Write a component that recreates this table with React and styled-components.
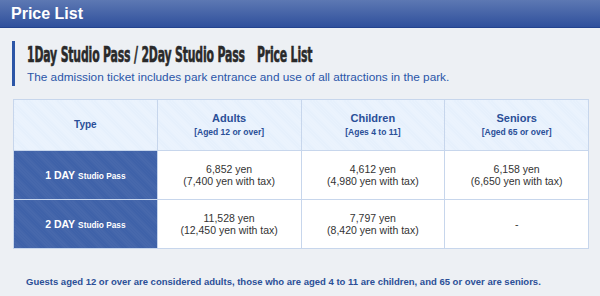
import React from "react";
import styled, { createGlobalStyle } from "styled-components";

const GlobalStyle = createGlobalStyle`
  html, body {
    margin: 0;
    padding: 0;
    background: #edf0f4;
  }
  body {
    font-family: "Liberation Sans", Arial, sans-serif;
  }
`;

const rows = [
  {
    day: "1 DAY",
    prices: [
      ["6,852 yen", "(7,400 yen with tax)"],
      ["4,612 yen", "(4,980 yen with tax)"],
      ["6,158 yen", "(6,650 yen with tax)"],
    ],
  },
  {
    day: "2 DAY",
    prices: [
      ["11,528 yen", "(12,450 yen with tax)"],
      ["7,797 yen", "(8,420 yen with tax)"],
      null,
    ],
  },
];

const groups = [
  { name: "Adults", ages: "[Aged 12 or over]" },
  { name: "Children", ages: "[Ages 4 to 11]" },
  { name: "Seniors", ages: "[Aged 65 or over]" },
];

const Page = styled.div`
  width: 600px;
  height: 296px;
  overflow: hidden;
  background: #edf0f4;
`;

const TopBar = styled.div`
  height: 27px;
  border-bottom: 1px solid #23438e;
  background: linear-gradient(#5d78b3, #2f509c);
  display: flex;
  align-items: center;
  padding-left: 11px;
  h1 {
    margin: 0;
    color: #fff;
    font-size: 16px;
    font-weight: bold;
    line-height: 1;
  }
`;

const Intro = styled.div`
  margin: 13px 0 0 12px;
  padding: 3px 0 0 12px;
  border-left: 3px solid #2c56a7;
  box-sizing: border-box;
  height: 45px;
`;

const Heading = styled.h2`
  margin: 0;
  font-family: "Liberation Sans Narrow", "DejaVu Sans Condensed", sans-serif;
  font-weight: bold;
  font-size: 22px;
  line-height: 22px;
  color: #2a2a2a;
  letter-spacing: -0.3px;
  -webkit-text-stroke: 0.6px #2a2a2a;
  transform: scaleX(0.55);
  transform-origin: left center;
  white-space: nowrap;
  span {
    margin-left: 22px;
  }
`;

const Lead = styled.p`
  margin: 4px 0 0;
  font-size: 11.8px;
  color: #2a55a8;
  white-space: nowrap;
`;

const Table = styled.table`
  margin: 13px 0 0 13px;
  width: 576px;
  border-collapse: collapse;
  table-layout: fixed;
  td, th {
    border: 1px solid #c7d6ec;
    text-align: center;
    vertical-align: middle;
    padding: 0;
  }
`;

const HeadCell = styled.th`
  height: 50px;
  background-color: #e4effc;
  background-image: repeating-linear-gradient(
    45deg,
    rgba(255, 255, 255, 0.35) 0 1px,
    transparent 1px 2px
  );
  color: #2a4f98;
  font-weight: bold;
  font-size: ${(p) => (p.$small ? "10px" : "11px")};
  line-height: 12px;
  small {
    display: block;
    font-size: 8.5px;
    margin-top: 2px;
  }
`;

const TypeCell = styled.td`
  height: 48px;
  background-color: #3b5fa7;
  background-image: repeating-linear-gradient(
    45deg,
    rgba(255, 255, 255, 0.08) 0 1px,
    transparent 1px 2px
  );
  color: #fff;
  font-weight: bold;
  font-size: 10.5px;
  span {
    font-size: 8.3px;
    margin-left: 3px;
  }
`;

const PriceCell = styled.td`
  background: #fff;
  color: #333;
  font-size: 10.5px;
  line-height: 12px;
`;

const Note = styled.p`
  margin: 27px 0 0 26px;
  font-size: 9.5px;
  font-weight: bold;
  color: #2b4f97;
  white-space: nowrap;
`;

export default function App() {
  return (
    <Page>
      <GlobalStyle />
      <TopBar>
        <h1>Price List</h1>
      </TopBar>
      <Intro>
        <Heading>
          1Day Studio Pass / 2Day Studio Pass<span>Price List</span>
        </Heading>
        <Lead>
          The admission ticket includes park entrance and use of all
          attractions in the park.
        </Lead>
      </Intro>
      <Table>
        <thead>
          <tr>
            <HeadCell $small>Type</HeadCell>
            {groups.map((g) => (
              <HeadCell key={g.name}>
                {g.name}
                <small>{g.ages}</small>
              </HeadCell>
            ))}
          </tr>
        </thead>
        <tbody>
          {rows.map((r) => (
            <tr key={r.day}>
              <TypeCell>
                {r.day}
                <span>Studio Pass</span>
              </TypeCell>
              {r.prices.map((p, i) => (
                <PriceCell key={i}>
                  {p ? (
                    <>
                      {p[0]}
                      <br />
                      {p[1]}
                    </>
                  ) : (
                    "-"
                  )}
                </PriceCell>
              ))}
            </tr>
          ))}
        </tbody>
      </Table>
      <Note>
        Guests aged 12 or over are considered adults, those who are aged 4 to
        11 are children, and 65 or over are seniors.
      </Note>
    </Page>
  );
}
